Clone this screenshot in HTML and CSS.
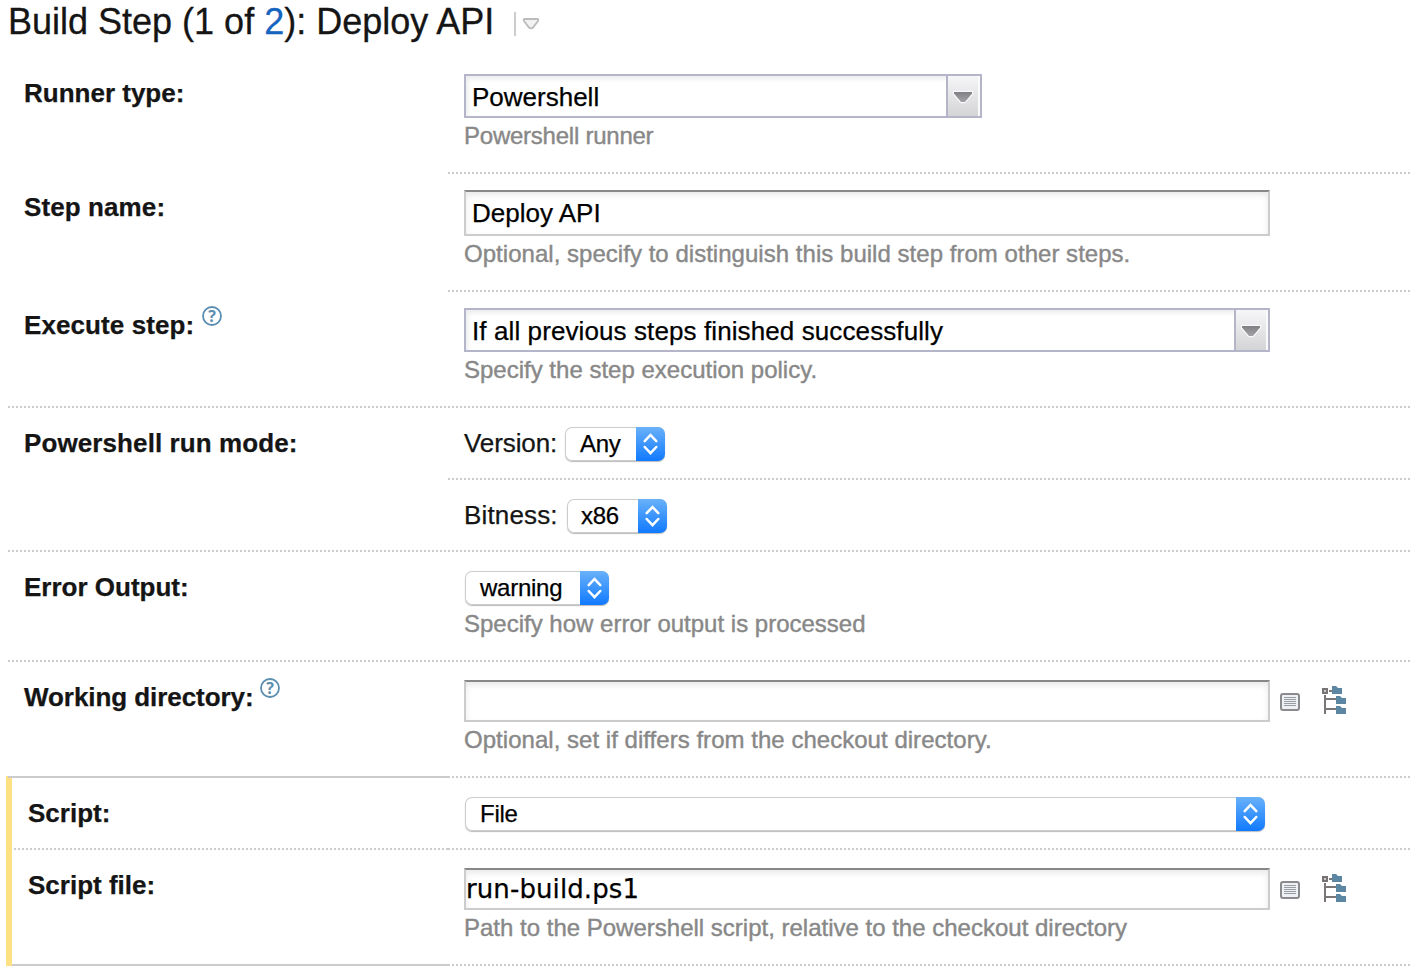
FILE: index.html
```html
<!DOCTYPE html>
<html lang="en">
<head>
<meta charset="utf-8">
<title>Build Step: Deploy API</title>
<link rel="stylesheet" href="styles.css">
</head>
<body>
<svg class="defs" width="0" height="0">
  <defs>
    <linearGradient id="arrow" x1="0" y1="0" x2="0" y2="1"><stop offset="0" stop-color="#808084"/><stop offset="1" stop-color="#a4a4a8"/></linearGradient>
    <symbol id="drop" viewBox="0 0 24 16"><path d="M3 3h18v1.500L14 13h-4L3 4.500z" fill="#fff" stroke="#f8f8fa" stroke-width="2.500" stroke-linejoin="round"/><path d="M3 3h18v1.500L14 13h-4L3 4.500z" fill="url(#arrow)"/></symbol>
    <symbol id="updown" viewBox="0 0 29 34"><path d="M8.700 14.200l5.800-6.200 5.800 6.200M8.700 20l5.800 6.200 5.800-6.200" fill="none" stroke="#fff" stroke-width="2.500" stroke-linecap="round" stroke-linejoin="miter"/></symbol>
    <symbol id="list" viewBox="0 0 20 18"><rect x="1" y="1" width="18" height="16" rx="2" fill="#edf1f5" stroke="#8b8b8d" stroke-width="2"/><path d="M4 4.500h12M4 6.500h12M4 8.500h12M4 10.500h12M4 12.500h12" stroke="#999ca0" stroke-width="1"/></symbol>
    <symbol id="tree" viewBox="0 0 24 28"><path d="M3 9v19M4 13h10M4 23h10M7 5h3" fill="none" stroke="#7b7777" stroke-width="2"/><rect x="1" y="3" width="4" height="4" fill="#ccc" stroke="#777374" stroke-width="2"/><path d="M10 0h4l2 2h4v6H10zM14 10h4l2 2h4v6H14zM14 20h4l2 2h4v6H14z" fill="#5b87a3"/></symbol>
  </defs>
</svg>
<h1 class="title"><span class="title-text">Build Step (1 of <a class="link">2</a>): Deploy API</span><i class="divider"></i>
  <svg class="title-menu" viewBox="0 0 18 14"><path d="M3 2h12q2 0 1 2l-5 6.500q-2 1.500-4 0L2 4Q1 2 3 2z" fill="#f2f2f2" stroke="#bbb" stroke-width="1.800"/></svg>
</h1>
<form class="form">
  <div class="row row-runner">
    <div class="label open">Runner type:</div>
    <div class="cell"><div class="combo combo-short"><span class="combo-text">Powershell</span><span class="combo-btn"><svg><use href="#drop"/></svg></span></div><p class="hint hint-runner">Powershell runner</p></div>
  </div>
  <div class="row row-name">
    <div class="label open wide">Step name:</div>
    <div class="cell"><input class="input input-tall" value="Deploy API"><p class="hint hint-name">Optional, specify to distinguish this build step from other steps.</p></div>
  </div>
  <div class="row row-exec">
    <div class="label wide">Execute step:<svg class="help" viewBox="0 0 20 20"><circle cx="10" cy="10" r="9" fill="none" stroke="#5b8fb0" stroke-width="1.800"/><text class="help-mark" x="10" y="15.500">?</text></svg></div>
    <div class="cell"><div class="combo"><span class="combo-text exec-text">If all previous steps finished successfully</span><span class="combo-btn"><svg><use href="#drop"/></svg></span></div><p class="hint">Specify the step execution policy.</p></div>
  </div>
  <div class="row row-small">
    <div class="label open low wide">Powershell run mode:</div>
    <div class="cell inline"><span class="caption">Version:</span><div class="select version"><span class="select-text">Any</span><svg class="select-btn"><use href="#updown"/></svg></div></div>
  </div>
  <div class="row row-small">
    <div class="label"></div>
    <div class="cell inline"><span class="caption bit">Bitness:</span><div class="select bitness"><span class="select-text">x86</span><svg class="select-btn"><use href="#updown"/></svg></div></div>
  </div>
  <div class="row row-error">
    <div class="label low">Error Output:</div>
    <div class="cell"><div class="select error"><span class="select-text">warning</span><svg class="select-btn"><use href="#updown"/></svg></div><p class="hint">Specify how error output is processed</p></div>
  </div>
  <div class="row row-dir">
    <div class="label low solid tight">Working directory:<svg class="help help-dir" viewBox="0 0 20 20"><circle cx="10" cy="10" r="9" fill="none" stroke="#5b8fb0" stroke-width="1.800"/><text class="help-mark" x="10" y="15.500">?</text></svg></div>
    <div class="cell after-solid"><div class="line"><input class="input" value=""><svg class="icon-list"><use href="#list"/></svg><svg class="icon-tree"><use href="#tree"/></svg></div><p class="hint hint-dir">Optional, set if differs from the checkout directory.</p></div>
  </div>
  <div class="changed">
    <div class="row row-small">
      <div class="label low">Script:</div>
      <div class="cell"><div class="select script"><span class="select-text">File</span><svg class="select-btn"><use href="#updown"/></svg></div></div>
    </div>
    <div class="row row-dir">
      <div class="label low solid">Script file:</div>
      <div class="cell after-solid"><div class="line"><input class="input mono" value="run-build.ps1"><svg class="icon-list"><use href="#list"/></svg><svg class="icon-tree"><use href="#tree"/></svg></div><p class="hint">Path to the Powershell script, relative to the checkout directory</p></div>
    </div>
  </div>
</form>
</body>
</html>
```
FILE: styles.css
```css
* { box-sizing: border-box; }
body { margin: 0; background: #fff; color: #151515; font: 26px/30px "Liberation Sans", Arial, sans-serif; overflow: hidden; }
.defs { display: block; }
.title { display: flex; align-items: flex-start; height: 60px; margin: 0; padding-left: 8px; font-size: 36px; line-height: 44px; font-weight: 400; white-space: nowrap; -webkit-text-stroke: 0.3px; }
.title-text { width: 506px; }
.link { color: #1564c0; }
.divider { width: 2px; height: 24px; margin-top: 12px; background: #ccc; }
.title-menu { width: 18px; height: 14px; margin: 17px 0 0 6px; }
.form { padding-left: 8px; -webkit-text-stroke: 0.25px; }
.row { display: grid; grid-template-columns: 440px 1fr; }
.row-runner { height: 114px; }
.row-name { height: 118px; }
.row-exec, .row-dir { height: 116px; }
.row-small { height: 72px; }
.row-error { height: 110px; }
.label, .cell { background: repeating-linear-gradient(90deg, #ccc 0 2px, transparent 2px 4px) left bottom / 100% 2px no-repeat; }
.cell.after-solid { background: linear-gradient(#ccc, #ccc) left bottom / 2px 2px no-repeat, repeating-linear-gradient(90deg, #ccc 0 2px, transparent 2px 4px) left bottom / 100% 2px no-repeat; }
.label { padding: 18px 0 0 16px; font-weight: 700; white-space: nowrap; }
.label.low { padding-top: 20px; }
.label.wide { letter-spacing: 0.1px; }
.label.tight { letter-spacing: -0.06px; }
.label.open { background: none; }
.label.solid { background: linear-gradient(#ccc, #ccc) left bottom / 100% 2px no-repeat; }
.cell { padding: 16px 0 0 16px; }
.row-runner .cell { padding-top: 14px; }
.row-dir .cell { padding-top: 18px; }
.row-small .cell, .row-error .cell { padding-top: 19px; }
.help { width: 20px; height: 20px; margin-left: 8px; vertical-align: 8px; margin-top: -10px; }
.help-dir { margin-left: 6px; }
.help-mark { font: 700 16px "Open Sans", sans-serif; fill: #5b8fb0; text-anchor: middle; }
.hint { margin: 4px 0 0; color: #888; font-size: 24px; line-height: 28px; white-space: nowrap; -webkit-text-stroke: 0.4px; }
.hint-runner { letter-spacing: -0.24px; }
.hint-name, .hint-dir { letter-spacing: 0.03px; }
.row-error .hint { margin-top: 5px; }
.combo { display: flex; width: 806px; height: 44px; border: 2px solid #b4b5c8; background: #fff; box-shadow: inset 2px 3px 5px #ececef; color: #000; }
.combo-short { width: 518px; }
.combo-text { flex: 1; padding-left: 6px; line-height: 42px; white-space: nowrap; }
.exec-text { letter-spacing: 0.1px; }
.combo-btn { width: 34px; border-left: 2px solid #b4b5c8; background: linear-gradient(90deg, transparent 30px, #fafafa 30px), linear-gradient(#f6f5f8, #d4d4d6); }
.combo-btn svg { display: block; width: 24px; height: 16px; margin: 13px 0 0 3px; }
.input { display: block; width: 806px; height: 42px; padding: 0 6px; border: 2px solid #ccc; border-top-color: #888; border-radius: 0; outline: 0; background: #fff; box-shadow: inset 0 3px 6px #e8e8e8; color: #000; font: 26px "Liberation Sans", Arial, sans-serif; }
.input-tall { height: 46px; }
.mono { padding: 0 0 0 0; font-family: "DejaVu Sans", Verdana, sans-serif; letter-spacing: 0.1px; }
.line { display: flex; }
.icon-list { width: 20px; height: 18px; margin: 13px 0 0 10px; }
.icon-tree { width: 24px; height: 28px; margin: 6px 0 0 22px; }
.inline { display: flex; }
.caption { width: 101px; margin-top: 1px; white-space: nowrap; letter-spacing: -0.1px; }
.bit { width: 103px; letter-spacing: 0.15px; }
.select { display: flex; justify-content: space-between; height: 34px; margin-left: 1px; border-radius: 7px; background: #fff; box-shadow: inset 0 0 0 1px #ccc, 0 1px 1px #bbb; color: #000; font-size: 24px; line-height: 34px; letter-spacing: -0.25px; }
.inline .select { margin-left: 0; }
.select-text { padding-left: 15px; }
.bitness .select-text { padding-left: 14px; }
.select-btn { width: 29px; height: 34px; border-radius: 0 7px 7px 0; background: linear-gradient(#69b1fa, #107aff); }
.version, .bitness { width: 100px; }
.error { width: 144px; }
.script { width: 800px; }
.changed { margin: -2px 0 0 -2px; padding-top: 2px; border-left: 6px solid #ffe082; }
.changed .row { grid-template-columns: 436px 1fr; }
.changed .label:not(.solid) { background-position: 2px bottom; }
```
